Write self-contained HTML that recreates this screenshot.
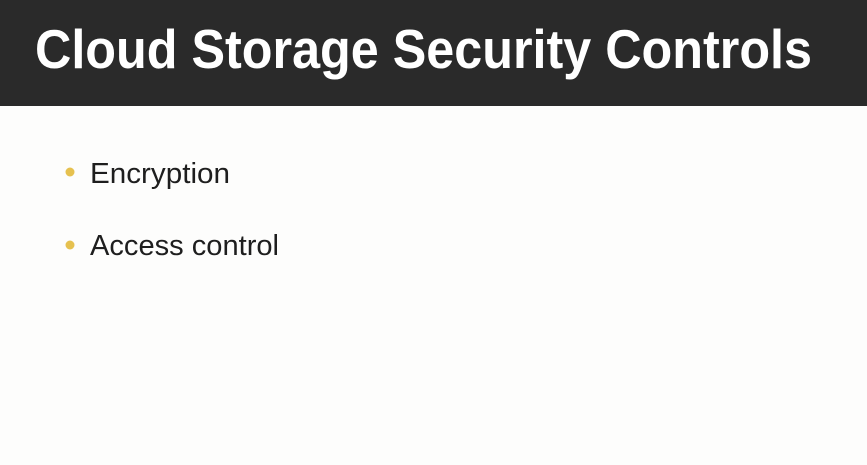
<!DOCTYPE html>
<html><head><style>
html,body{margin:0;padding:0;width:867px;height:465px;overflow:hidden;background:#fdfdfc;}
</style></head><body>
<svg width="867" height="465" xmlns="http://www.w3.org/2000/svg" style="display:block">
<rect x="0" y="0" width="867" height="465" fill="#fdfdfc"/>
<rect x="0" y="0" width="867" height="106" fill="#2a2a2a"/>
<text x="35" y="68" font-family="Liberation Sans, sans-serif" font-weight="bold" font-size="55" fill="#ffffff" textLength="777" lengthAdjust="spacingAndGlyphs">Cloud Storage Security Controls</text>
<circle cx="70" cy="172" r="4.5" fill="#e6c14f"/>
<circle cx="70" cy="245" r="4.5" fill="#e6c14f"/>
<text x="90" y="183" font-family="Liberation Sans, sans-serif" font-size="29" fill="#1e1e1e" textLength="140" lengthAdjust="spacingAndGlyphs">Encryption</text>
<text x="90" y="255" font-family="Liberation Sans, sans-serif" font-size="29" fill="#1e1e1e" textLength="189" lengthAdjust="spacingAndGlyphs">Access control</text>
</svg>
</body></html>
